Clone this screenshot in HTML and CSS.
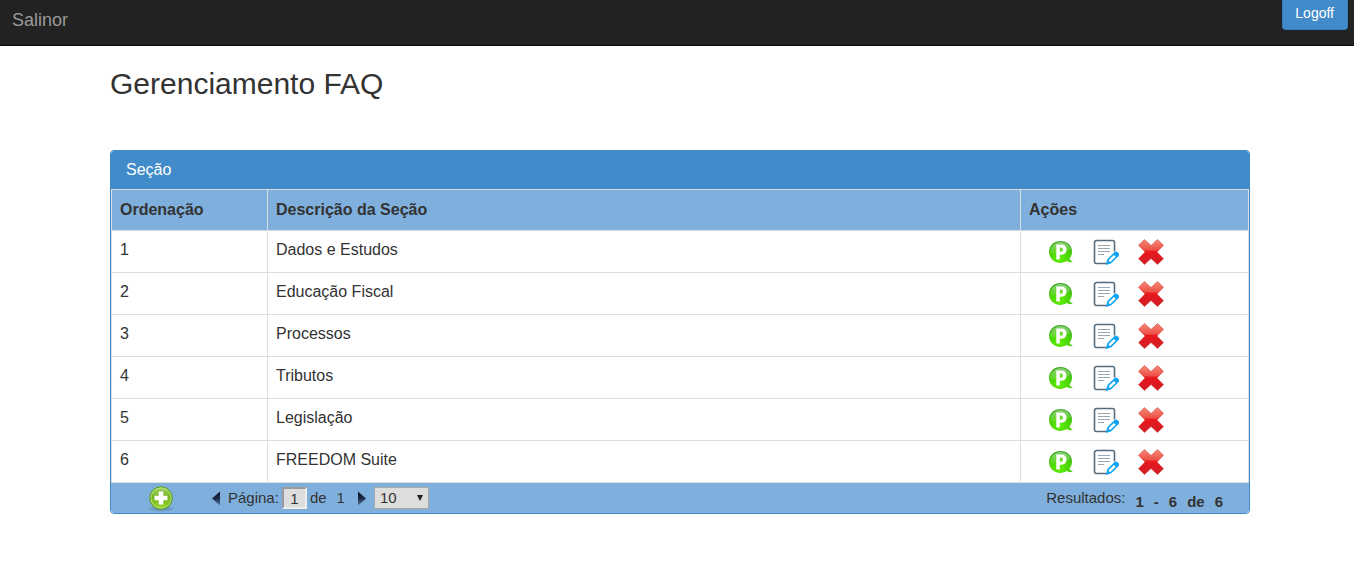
FILE: index.html
```
<!DOCTYPE html>
<html lang="pt-BR">
<head>
<meta charset="utf-8">
<title>Gerenciamento FAQ</title>
<link rel="stylesheet" href="styles.css">
</head>
<body>
<svg class="sprite" aria-hidden="true">
  <defs>
    <radialGradient id="green" cx="45%" cy="80%" r="80%">
      <stop offset="0" stop-color="#5ff000"/><stop offset=".6" stop-color="#48cf08"/><stop offset="1" stop-color="#39a521"/>
    </radialGradient>
    <linearGradient id="gloss" x1="0" y1="0" x2="0" y2="1">
      <stop offset="0" stop-color="#fff" stop-opacity=".4"/><stop offset="1" stop-color="#fff" stop-opacity=".1"/>
    </linearGradient>
    <linearGradient id="red" x1="0" y1="0" x2="0" y2="1">
      <stop offset="0" stop-color="#f58a78"/><stop offset=".4" stop-color="#ee5248"/><stop offset=".48" stop-color="#e9191f"/><stop offset="1" stop-color="#cf1c24"/>
    </linearGradient>
    <linearGradient id="lime" x1="0" y1="0" x2="0" y2="1">
      <stop offset="0" stop-color="#a5d468"/><stop offset=".5" stop-color="#72b41b"/><stop offset="1" stop-color="#9bd92d"/>
    </linearGradient>
    <linearGradient id="navy" x1="0" y1="0" x2="0" y2="1">
      <stop offset="0" stop-color="#060d20"/><stop offset=".5" stop-color="#1c2b48"/><stop offset="1" stop-color="#5878a4"/>
    </linearGradient>
    <radialGradient id="shade">
      <stop offset="0" stop-color="#355f80" stop-opacity=".6"/><stop offset="1" stop-color="#355f80" stop-opacity="0"/>
    </radialGradient>
  </defs>
  <symbol id="ask" viewBox="0 0 26 26">
    <path d="M12.500 2C19 2 24 6.600 24 12.500c0 3-1 5.400-2.600 7.200.7 1.400 2 2.300 3.600 2.900-2 .9-4.500.7-6.300-.5-1.800 1.200-3.900 1.800-6.200 1.800C6 23.900 1 19 1 12.700 1 6.700 6 2 12.500 2Z" fill="url(#green)"/>
    <path d="M12.500 3c5 0 9 2.800 9.800 6.800-4 3.400-13 5.400-20 4.200C1.800 8 6.500 3 12.500 3Z" fill="url(#gloss)"/>
    <path fill-rule="evenodd" d="M8.300 5.500h4.900c3.400 0 5.300 1.900 5.300 5 0 3.400-2.200 5.300-5.700 5.300h-1V20.500H8.300ZM11.800 8.500v4.300h1.100c1.300 0 2.100-.8 2.100-2.200S14.300 8.500 13.100 8.500Z" fill="#fff"/>
  </symbol>
  <symbol id="edit" viewBox="0 0 26 26">
    <path d="M14 24.500H3.500A2 2 0 0 1 1.500 22.500V3.500A2 2 0 0 1 3.500 1.500H19.500A2 2 0 0 1 21.500 3.500V12.500" fill="none" stroke="#546e80" stroke-width="1.600"/>
    <path d="M5 6.500H17M5 9.500H17M5 12.500H17M5 15.500H11" stroke="#9aa7b1" stroke-width="1.200"/>
    <path d="M15 20.600 22.100 13.700Q23.200 13 24.300 14L25 14.800Q25.700 15.800 24.800 16.700L17.900 23.600 14 24.900Z" fill="#fff" stroke="#0fa5f3" stroke-width="1.600"/>
    <path d="M20.200 15.400 23.300 18.300 25 16.500Q25.600 15.400 24.400 14.200 23.200 13 22.200 13.700ZM14 24.900 15 21 17.600 23.800Z" fill="#0fa5f3"/>
  </symbol>
  <symbol id="delete" viewBox="0 0 26 26">
    <path d="M6.500.6 13 6.500 19.500.6 25.500 6.300 19 13 25.500 19.700 19.500 25.500 13 19.600 6.500 25.500.5 19.700 7 13 .5 6.300Z" fill="url(#red)" stroke="#d9443e" stroke-width=".6"/>
  </symbol>
  <symbol id="add" viewBox="0 0 32 28">
    <ellipse cx="16" cy="24.500" rx="15" ry="3.500" fill="url(#shade)"/>
    <circle cx="16" cy="14" r="11.200" fill="url(#lime)" stroke="#539413" stroke-width="1"/>
    <circle cx="16" cy="14" r="10.200" fill="none" stroke="#c5e796" stroke-width=".8"/>
    <path d="M13.700 7.500h4.600v4.200h4.200v4.600h-4.200v4.200h-4.600v-4.200H9.500v-4.600h4.200Z" fill="#fff"/>
  </symbol>
  <symbol id="prev" viewBox="0 0 8 16"><path d="M8 1.500V15.500L0 8.500Z" fill="url(#navy)"/></symbol>
  <symbol id="next" viewBox="0 0 8 16"><path d="M0 1.500V15.500L8 8.500Z" fill="url(#navy)"/></symbol>
</svg>

<header class="navbar">
  <a class="brand" href="#">Salinor</a>
  <button class="logoff" type="button">Logoff</button>
</header>

<main class="page">
  <div class="container">
    <h1 class="title">Gerenciamento FAQ</h1>
    <section class="panel">
      <h2 class="panel-heading">Seção</h2>
      <table class="grid">
        <colgroup><col class="col-order"><col><col class="col-actions"></colgroup>
        <thead>
          <tr><th scope="col">Ordenação</th><th scope="col">Descrição da Seção</th><th scope="col">Ações</th></tr>
        </thead>
        <tbody>
          <tr><td>1</td><td>Dados e Estudos</td><td><div class="actions"><button type="button" aria-label="Perguntas"><svg><use href="#ask"/></svg></button><button type="button" aria-label="Editar"><svg><use href="#edit"/></svg></button><button type="button" aria-label="Excluir"><svg><use href="#delete"/></svg></button></div></td></tr>
          <tr><td>2</td><td>Educação Fiscal</td><td><div class="actions"><button type="button" aria-label="Perguntas"><svg><use href="#ask"/></svg></button><button type="button" aria-label="Editar"><svg><use href="#edit"/></svg></button><button type="button" aria-label="Excluir"><svg><use href="#delete"/></svg></button></div></td></tr>
          <tr><td>3</td><td>Processos</td><td><div class="actions"><button type="button" aria-label="Perguntas"><svg><use href="#ask"/></svg></button><button type="button" aria-label="Editar"><svg><use href="#edit"/></svg></button><button type="button" aria-label="Excluir"><svg><use href="#delete"/></svg></button></div></td></tr>
          <tr><td>4</td><td>Tributos</td><td><div class="actions"><button type="button" aria-label="Perguntas"><svg><use href="#ask"/></svg></button><button type="button" aria-label="Editar"><svg><use href="#edit"/></svg></button><button type="button" aria-label="Excluir"><svg><use href="#delete"/></svg></button></div></td></tr>
          <tr><td>5</td><td>Legislação</td><td><div class="actions"><button type="button" aria-label="Perguntas"><svg><use href="#ask"/></svg></button><button type="button" aria-label="Editar"><svg><use href="#edit"/></svg></button><button type="button" aria-label="Excluir"><svg><use href="#delete"/></svg></button></div></td></tr>
          <tr><td>6</td><td>FREEDOM Suite</td><td><div class="actions"><button type="button" aria-label="Perguntas"><svg><use href="#ask"/></svg></button><button type="button" aria-label="Editar"><svg><use href="#edit"/></svg></button><button type="button" aria-label="Excluir"><svg><use href="#delete"/></svg></button></div></td></tr>
        </tbody>
      </table>
      <footer class="pager">
        <button class="add" type="button" aria-label="Adicionar"><svg><use href="#add"/></svg></button>
        <button class="arrow" type="button" aria-label="Página anterior"><svg><use href="#prev"/></svg></button>
        <label class="page-label" for="page">Página:</label>
        <input class="page-input" id="page" type="text" value="1">
        <span class="of">de</span>
        <span class="total">1</span>
        <button class="arrow" type="button" aria-label="Próxima página"><svg><use href="#next"/></svg></button>
        <div class="size-wrap">
          <select class="size" aria-label="Itens por página"><option>10</option><option>20</option><option>50</option></select>
          <span class="caret" aria-hidden="true"></span>
        </div>
        <div class="results">
          <span>Resultados:</span>
          <div class="range"><span>1</span><span>-</span><span>6</span><span>de</span><span>6</span></div>
        </div>
      </footer>
    </section>
  </div>
</main>
</body>
</html>
```
FILE: styles.css
```
* { box-sizing: border-box; }

body {
  margin: 0;
  background: #fff;
  color: #333;
  font: 16px/22px "Liberation Sans", Arial, sans-serif;
}

button {
  padding: 0;
  border: 0;
  background: none;
  font: inherit;
  cursor: pointer;
}

.sprite { position: absolute; width: 0; height: 0; }

.navbar {
  display: flex;
  justify-content: space-between;
  align-items: flex-start;
  padding: 0 6px 0 12px;
  background: #222;
  border-bottom: 1px solid #080808;
}

.brand {
  padding: 10px 0 15px;
  color: #999;
  font-size: 18px;
  line-height: 20px;
  text-decoration: none;
}

.logoff {
  padding: 3px 13px 6px 12px;
  border: 1px solid #357ebd;
  border-top: 0;
  border-radius: 0 0 4px 4px;
  background: #428bca;
  color: #fff;
  font-size: 14px;
  line-height: 20px;
}

.page { padding: 20px 0 20px 6px; }

.container { max-width: 1140px; margin: 0 auto; }

.title {
  margin: 0 0 49px;
  font-size: 30px;
  font-weight: 400;
  line-height: 35px;
}

.panel {
  border: 1px solid #428bca;
  border-radius: 4px;
  overflow: hidden;
}

.panel-heading {
  margin: 0;
  padding: 8px 15px;
  background: #428bca;
  color: #fff;
  font-size: 16px;
  font-weight: 400;
}

.grid {
  width: 100%;
  border-collapse: collapse;
  table-layout: fixed;
}

.col-order { width: 156px; }
.col-actions { width: 228px; }

.grid th,
.grid td {
  padding: 8px;
  border: 1px solid #ddd;
  text-align: left;
  vertical-align: top;
}

.grid th {
  padding: 9px 8px;
  background: #7fafdc;
}

.grid td { height: 42px; }

.grid td:last-child { padding: 8px 27px 7px; }

.actions { display: flex; gap: 19px; }

.actions button,
.actions svg { display: block; width: 26px; height: 26px; }

.pager {
  display: flex;
  align-items: center;
  padding: 0 26px 0 34px;
  background: #7fafdc;
  font-size: 15px;
  line-height: 30px;
}

.add { margin-right: 35px; }
.add svg { display: block; width: 32px; height: 28px; }

.arrow svg { display: block; width: 8px; height: 16px; }

.page-label { margin: 0 3px 0 8px; }

.page-input {
  width: 25px;
  height: 22px;
  padding: 0;
  border: 2px inset #eee;
  border-radius: 0;
  background: #ddd;
  color: #333;
  font: inherit;
  line-height: 18px;
  text-align: center;
}

.of { margin: 0 10px 0 3px; }
.total { margin-right: 13px; }

.size-wrap {
  display: grid;
  align-items: center;
  margin-left: 8px;
}

.size {
  grid-area: 1 / 1;
  width: 55px;
  height: 22px;
  padding: 0 5px;
  border: 1px solid #a9a9a9;
  border-radius: 0;
  appearance: none;
  background: #ddd;
  color: #333;
  font: inherit;
  line-height: 18px;
}

.caret {
  grid-area: 1 / 1;
  justify-self: end;
  margin-right: 6px;
  border: solid transparent;
  border-width: 6px 3px 0;
  border-top-color: #222;
  pointer-events: none;
}

.results {
  display: flex;
  gap: 10px;
  margin-left: auto;
}

.range {
  display: flex;
  gap: 10px;
  padding-top: 7px;
  font-weight: 700;
  line-height: 23px;
}
```
